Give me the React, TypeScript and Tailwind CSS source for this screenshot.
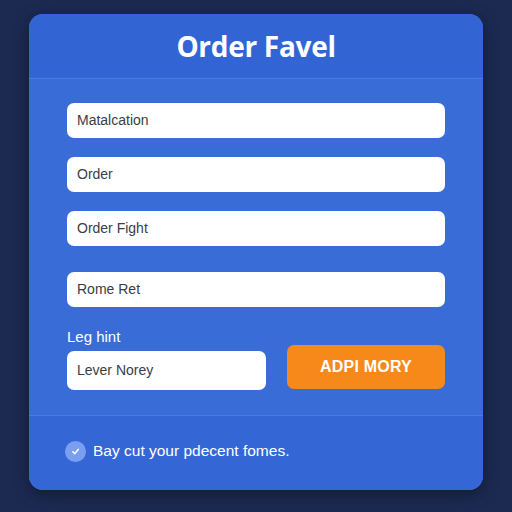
import React from "react";

const fields = ["Matalcation", "Order", "Order Fight", "Rome Ret"];

function Field({ text }: { text: string }) {
  return (
    <div className="h-[35px] w-full rounded-[7px] bg-white flex items-center px-[10px] text-[14px] text-[#3a3d44]">
      {text}
    </div>
  );
}

export default function App() {
  return (
    <div
      className="w-[512px] h-[512px] bg-[#1c2951] pt-[14px] pl-[29px]"
      style={{ fontFamily: "'Liberation Sans', Arial, sans-serif" }}
    >
      <div className="w-[454px] h-[476px] rounded-[14px] bg-[#3a6cd8] overflow-hidden flex flex-col shadow-[0_4px_16px_rgba(0,0,0,0.35)]">
        <div className="h-[65px] bg-[#3265d3] border-b border-[#4a7ae0] flex items-center justify-center">
          <h1
            className="text-[28px] font-bold text-white tracking-[-0.3px]"
            style={{ fontFamily: "'Open Sans', 'Liberation Sans', sans-serif" }}
          >
            Order Favel
          </h1>
        </div>
        <div className="flex-1 px-[38px] pt-[24px] flex flex-col">
          <div className="flex flex-col gap-[19px]">
            <Field text={fields[0]} />
            <Field text={fields[1]} />
            <Field text={fields[2]} />
          </div>
          <div className="mt-[26px]">
            <Field text={fields[3]} />
          </div>
          <div className="mt-[21px] flex items-end gap-[21px]">
            <div className="flex flex-col w-[199px]">
              <span className="text-[15px] text-white mb-[5px] leading-[18px]">Leg hint</span>
              <div className="h-[39px] rounded-[7px] bg-white flex items-center px-[10px] text-[14px] text-[#3a3d44]">
                Lever Norey
              </div>
            </div>
            <button className="flex-1 h-[44px] mb-[1px] rounded-[7px] bg-[#f7891b] text-white font-bold text-[16px] tracking-[0.2px] flex items-center justify-center">
              ADPI MORY
            </button>
          </div>
        </div>
        <div className="h-[75px] border-t border-[#4c7be0] bg-[#3467d5] flex items-center pl-[36px] gap-[7px] pb-[4px]">
          <div className="w-[21px] h-[21px] rounded-full bg-[#7b9ff0] flex items-center justify-center">
            <svg width="11" height="11" viewBox="0 0 12 12" fill="none">
              <path d="M3 6.3 L5.1 8.4 L9 3.8" stroke="white" strokeWidth="1.8" strokeLinecap="round" strokeLinejoin="round" />
            </svg>
          </div>
          <span className="text-[15.5px] text-white">Bay cut your pdecent fomes.</span>
        </div>
      </div>
    </div>
  );
}
